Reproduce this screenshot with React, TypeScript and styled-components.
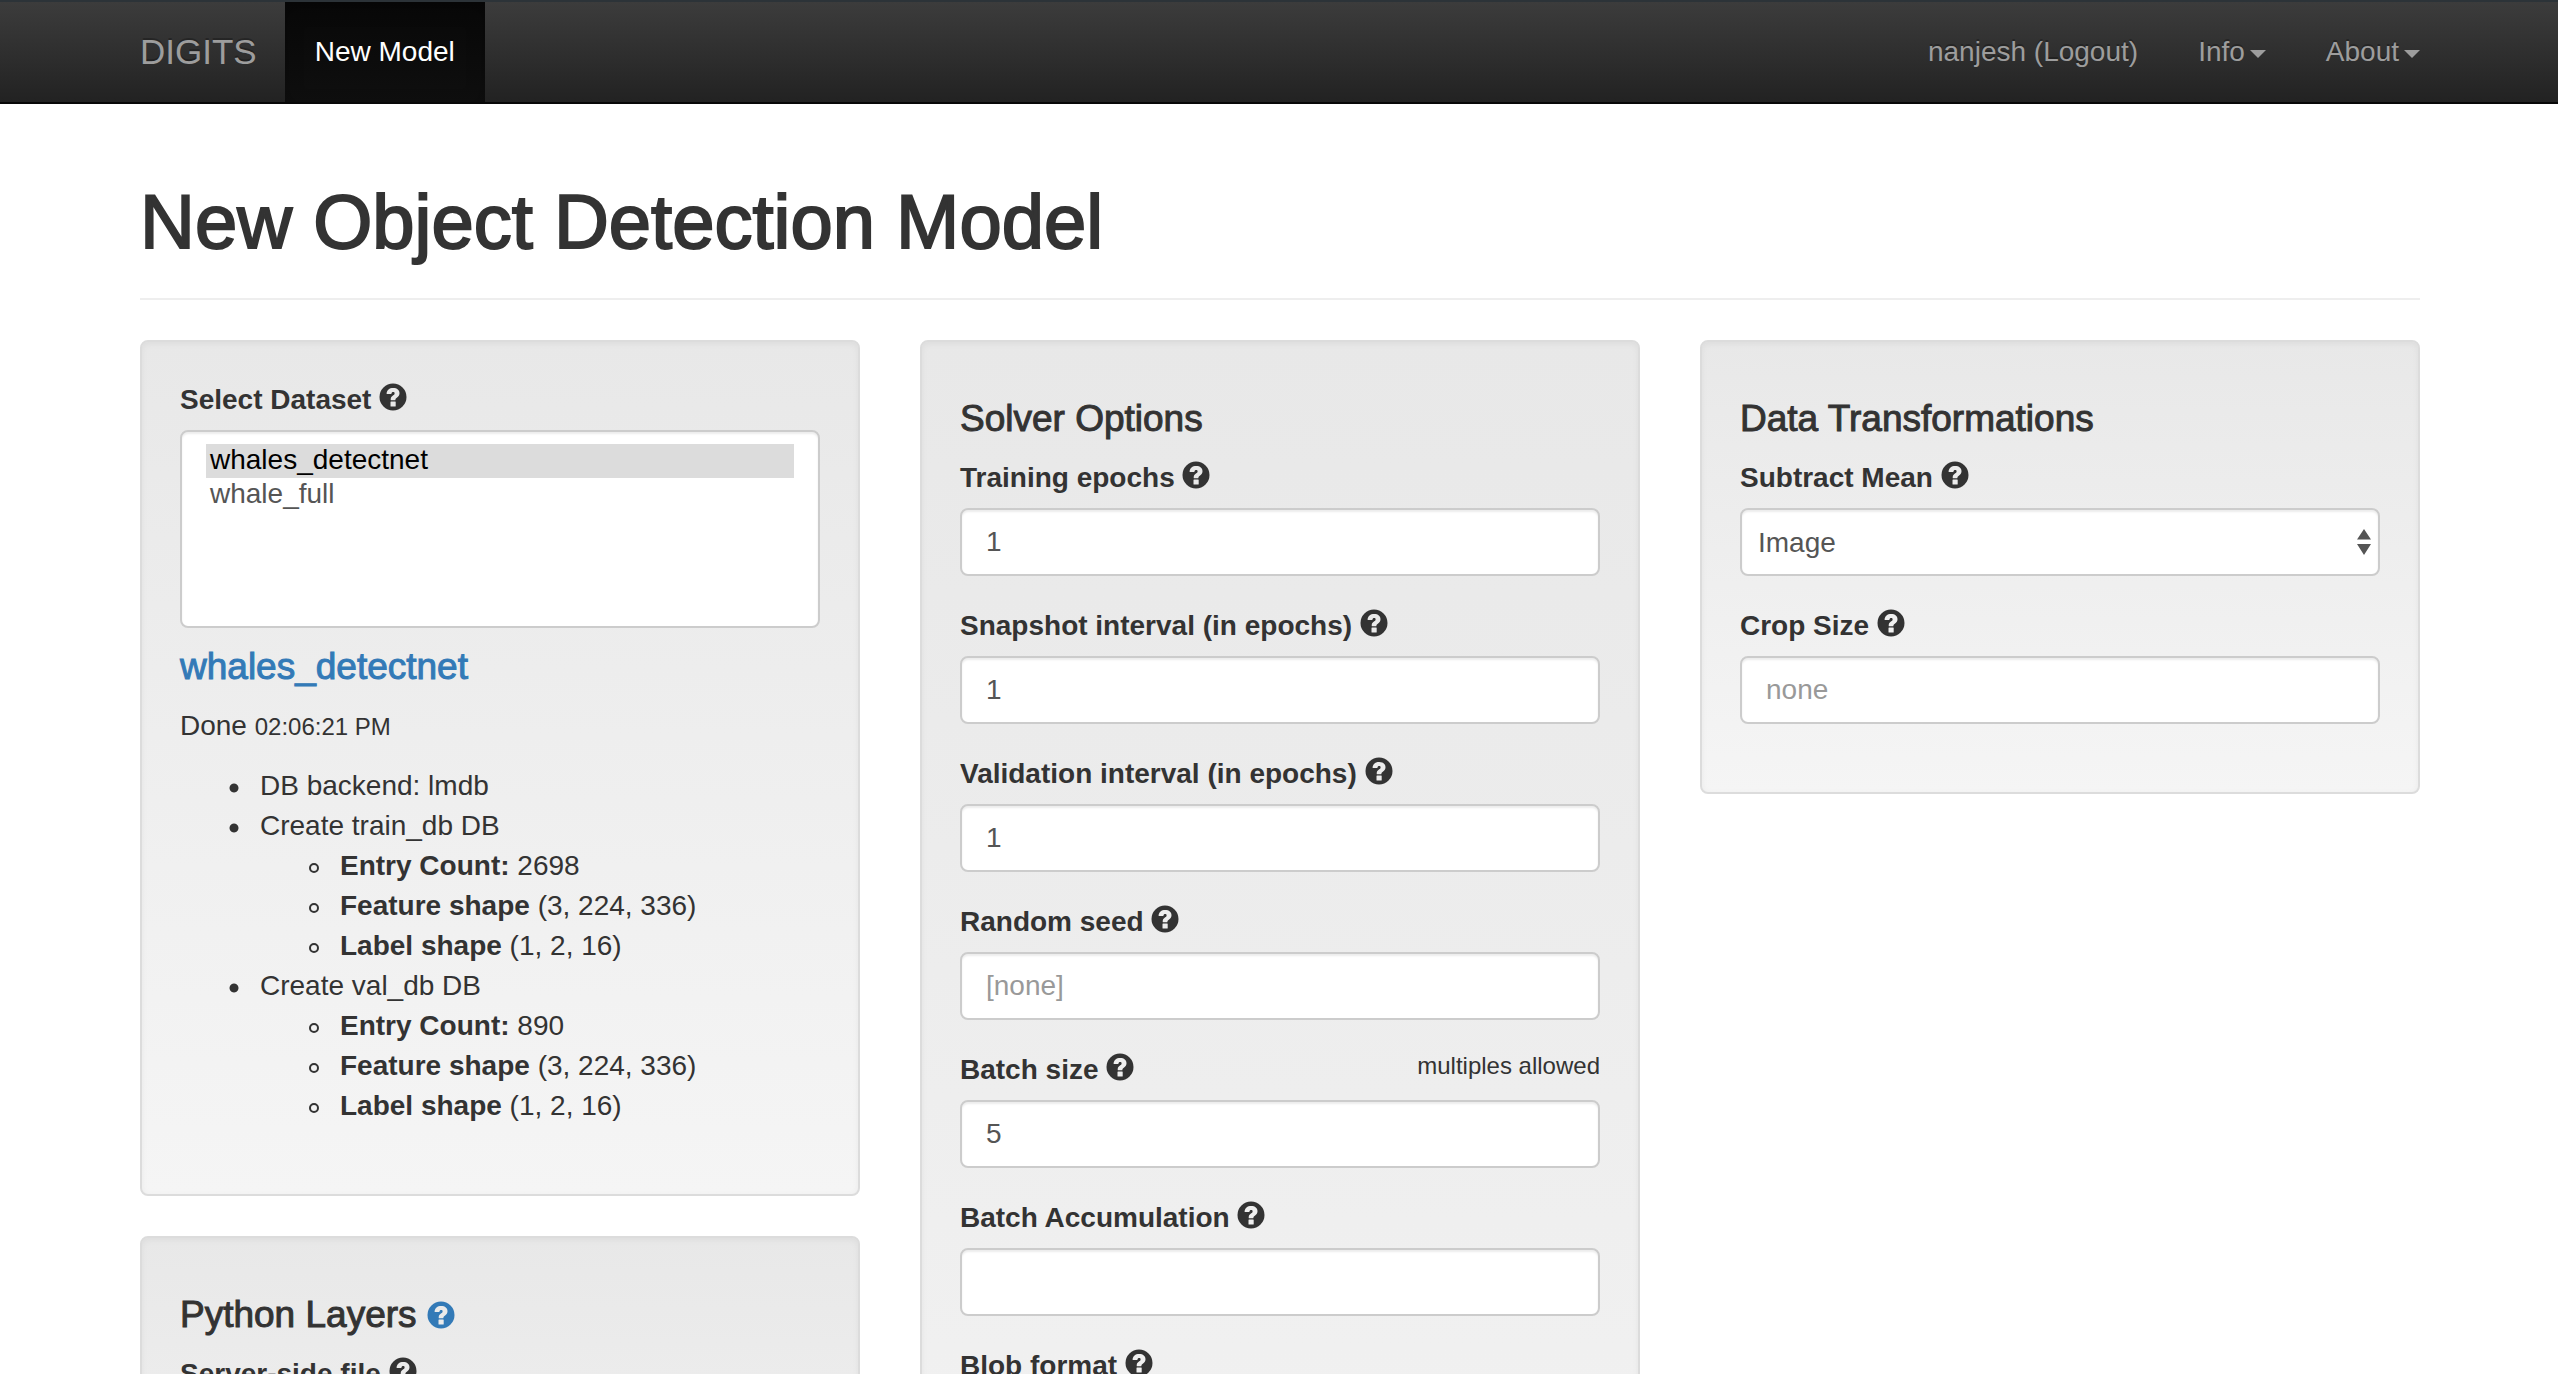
import React, { ReactNode } from "react";
import styled, { createGlobalStyle } from "styled-components";

const GlobalStyle = createGlobalStyle`
  *, *::before, *::after { box-sizing: border-box; }
  body {
    margin: 0;
    background: #fff;
    color: #333;
    font-family: "Liberation Sans", "Helvetica Neue", Helvetica, Arial, sans-serif;
    font-size: 28px;
    line-height: 40px;
  }
`;

const Page = styled.div`
  height: 100vh;
  overflow: hidden;
`;

const Navbar = styled.nav`
  display: flex;
  justify-content: space-between;
  padding: 0 138px 0 140px;
  border-top: 2px solid #2c3338;
  border-bottom: 2px solid #080808;
  background: linear-gradient(to bottom, #3c3c3c, #222);
`;

const NavGroup = styled.div`
  display: flex;
`;

const Brand = styled.a`
  padding: 30px 28px 30px 0;
  color: #9d9d9d;
  font-size: 35px;
  text-decoration: none;
  text-shadow: 0 -2px 0 rgba(0, 0, 0, 0.25);
`;

const NavLink = styled.a<{ $active?: boolean }>`
  display: flex;
  align-items: center;
  padding: 30px;
  color: ${(p) => (p.$active ? "#fff" : "#9d9d9d")};
  background: ${(p) => (p.$active ? "linear-gradient(to bottom, #080808, #0f0f0f)" : "none")};
  box-shadow: ${(p) => (p.$active ? "inset 0 6px 18px rgba(0, 0, 0, 0.25)" : "none")};
  text-decoration: none;
  text-shadow: 0 -2px 0 rgba(0, 0, 0, 0.25);

  &:last-child {
    padding-right: ${(p) => (p.$active ? "30px" : "0")};
  }
`;

const Caret = styled.span`
  margin-top: 4px;
  margin-left: 5px;
  border-top: 8px solid currentColor;
  border-right: 8px solid transparent;
  border-left: 8px solid transparent;
`;

const Main = styled.main`
  padding: 0 138px 0 140px;
`;

const PageHeader = styled.header`
  margin: 78px 0 40px;
  padding-bottom: 36px;
  border-bottom: 2px solid #eee;
`;

const Title = styled.h1`
  margin: 0;
  font-size: 76px;
  font-weight: 400;
  line-height: 80px;
  -webkit-text-stroke: 2px currentColor;
`;

const Columns = styled.form`
  display: grid;
  grid-template-columns: repeat(3, 1fr);
  align-items: start;
  gap: 60px;
`;

const Column = styled.div`
  display: flex;
  flex-direction: column;
  gap: 40px;
`;

const Well = styled.section<{ $minHeight?: number }>`
  min-height: ${(p) => (p.$minHeight ? `${p.$minHeight}px` : "auto")};
  padding: 38px;
  border: 2px solid #dcdcdc;
  border-radius: 8px;
  background: linear-gradient(to bottom, #e8e8e8, #f5f5f5);
  box-shadow: inset 0 2px 6px rgba(0, 0, 0, 0.05), 0 2px 0 rgba(255, 255, 255, 0.1);
`;

const Heading = styled.h4`
  margin: 20px 0;
  font-size: 37px;
  font-weight: 400;
  line-height: 38px;
  -webkit-text-stroke: 1px currentColor;
`;

const Link = styled.a`
  color: #337ab7;
  text-decoration: none;
`;

const Group = styled.div`
  margin-bottom: 30px;
`;

const LabelRow = styled.div`
  display: flex;
  justify-content: space-between;
  align-items: flex-start;
  margin-bottom: 10px;
`;

const Label = styled.label`
  font-weight: 700;
`;

const Small = styled.small`
  font-size: 24px;
  line-height: 32px;
`;

const HelpSvg = styled.svg`
  width: 28px;
  height: 28px;
  vertical-align: -2px;
`;

const controlStyle = `
  display: block;
  width: 100%;
  border: 2px solid #ccc;
  border-radius: 8px;
  background: #fff;
  box-shadow: inset 0 2px 2px rgba(0, 0, 0, 0.075);
  color: #555;
  font-family: inherit;
  font-size: 28px;
  outline: none;
`;

const Input = styled.input`
  ${controlStyle}
  height: 68px;
  padding: 12px 24px;

  &::placeholder { color: #999; opacity: 1; }
`;

const ListBox = styled.select`
  ${controlStyle}
  height: 198px;
  padding: 12px 24px;
  overflow: hidden;

  option {
    height: 34px;
    min-height: 34px;
    padding: 0 4px;
    line-height: 34px;
  }

  option:checked {
    background: #dcdcdc linear-gradient(#dcdcdc, #dcdcdc);
    color: #000;
  }
`;

const SelectWrap = styled.div`
  position: relative;
`;

const Select = styled.select`
  ${controlStyle}
  height: 68px;
  padding: 0 44px 0 16px;
  appearance: none;
`;

const SelectArrows = styled.svg`
  position: absolute;
  top: 21px;
  right: 9px;
  width: 14px;
  height: 26px;
  fill: #555;
  pointer-events: none;
`;

const Status = styled.p`
  margin: 0 0 20px;
`;

const Details = styled.ul`
  margin: 0 0 30px;
  padding-left: 80px;
  list-style: none;
`;

const SubDetails = styled(Details)`
  margin: 0;
`;

const Item = styled.li<{ $ring?: boolean }>`
  position: relative;

  &::before {
    content: "";
    position: absolute;
    top: 17px;
    left: -31px;
    width: 10px;
    height: 10px;
    border: 2px solid ${(p) => (p.$ring ? "#333" : "transparent")};
    border-radius: 50%;
    background: ${(p) => (p.$ring ? "none" : "radial-gradient(circle, #333 4px, transparent 5px) border-box")};
  }
`;

const HelpIcon = () => (
  <HelpSvg viewBox="0 0 28 28" aria-hidden="true">
    <path
      fill="currentColor"
      fillRule="evenodd"
      d="M14 .5a13.5 13.5 0 1 1 0 27a13.5 13.5 0 0 1 0-27zM11.5 18.900v4.200q0 .5.5.5h4.200q.5 0 .5-.5v-4.200q0-.5-.5-.5h-4.200q-.5 0-.5.5zM8.100 11.100h3.800q.4 0 .5-.4c.2-1.100.7-1.600 1.700-1.600c1 0 1.500.5 1.500 1.300c0 .8-.4 1.200-1.400 1.900c-1.700 1.200-2.500 2.300-2.500 4.100v.3q0 .5.5.5h3.700q.5 0 .5-.5c0-.9.4-1.300 1.400-2c1.800-1.200 2.700-2.500 2.700-4.400c0-3.200-2.400-5.200-6.300-5.200c-3.900 0-6.300 2-6.600 5.500q0 .5.5.5z"
    />
  </HelpSvg>
);

type FieldProps = { id: string; label: string; hint?: string; children: ReactNode };

const Field = ({ id, label, hint, children }: FieldProps) => (
  <Group>
    <LabelRow>
      <Label htmlFor={id}>
        {label} <HelpIcon />
      </Label>
      {hint && <Small>{hint}</Small>}
    </LabelRow>
    {children}
  </Group>
);

const DropDown = ({ id, options }: { id: string; options: string[] }) => (
  <SelectWrap>
    <Select id={id}>
      {options.map((o) => (
        <option key={o}>{o}</option>
      ))}
    </Select>
    <SelectArrows viewBox="0 0 14 26" aria-hidden="true">
      <path d="M7 0L14 10.500H0zM7 26L0 15H14z" />
    </SelectArrows>
  </SelectWrap>
);

const solverFields = [
  { id: "epochs", label: "Training epochs", value: "1" },
  { id: "snapshot", label: "Snapshot interval (in epochs)", value: "1" },
  { id: "validation", label: "Validation interval (in epochs)", value: "1" },
  { id: "seed", label: "Random seed", placeholder: "[none]" },
  { id: "batch", label: "Batch size", value: "5", hint: "multiples allowed" },
  { id: "accumulation", label: "Batch Accumulation" },
];

const databases = [
  { name: "train_db", count: 2698 },
  { name: "val_db", count: 890 },
];

export default function App() {
  return (
    <Page>
      <GlobalStyle />
      <Navbar>
        <NavGroup>
          <Brand href="#">DIGITS</Brand>
          <NavLink href="#" $active>
            New Model
          </NavLink>
        </NavGroup>
        <NavGroup>
          <NavLink href="#">nanjesh (Logout)</NavLink>
          <NavLink href="#">
            Info
            <Caret />
          </NavLink>
          <NavLink href="#">
            About
            <Caret />
          </NavLink>
        </NavGroup>
      </Navbar>
      <Main>
        <PageHeader>
          <Title>New Object Detection Model</Title>
        </PageHeader>
        <Columns>
          <Column>
            <Well>
              <LabelRow>
                <Label htmlFor="dataset">
                  Select Dataset <HelpIcon />
                </Label>
              </LabelRow>
              <ListBox id="dataset" size={4} defaultValue="whales_detectnet">
                <option>whales_detectnet</option>
                <option>whale_full</option>
              </ListBox>
              <Heading>
                <Link href="#">whales_detectnet</Link>
              </Heading>
              <Status>
                Done <Small>02:06:21 PM</Small>
              </Status>
              <Details>
                <Item>DB backend: lmdb</Item>
                {databases.map((db) => (
                  <Item key={db.name}>
                    Create {db.name} DB
                    <SubDetails>
                      <Item $ring>
                        <b>Entry Count:</b> {db.count}
                      </Item>
                      <Item $ring>
                        <b>Feature shape</b> (3, 224, 336)
                      </Item>
                      <Item $ring>
                        <b>Label shape</b> (1, 2, 16)
                      </Item>
                    </SubDetails>
                  </Item>
                ))}
              </Details>
            </Well>
            <Well $minHeight={460}>
              <Heading>
                Python Layers{" "}
                <Link href="#" aria-label="Help">
                  <HelpIcon />
                </Link>
              </Heading>
              <Field id="python" label="Server-side file">
                <Input id="python" />
              </Field>
            </Well>
          </Column>
          <Well $minHeight={1640}>
            <Heading>Solver Options</Heading>
            {solverFields.map((f) => (
              <Field key={f.id} id={f.id} label={f.label} hint={f.hint}>
                <Input id={f.id} defaultValue={f.value} placeholder={f.placeholder} />
              </Field>
            ))}
            <Field id="blob" label="Blob format">
              <DropDown id="blob" options={["NVCaffe"]} />
            </Field>
          </Well>
          <Well>
            <Heading>Data Transformations</Heading>
            <Field id="mean" label="Subtract Mean">
              <DropDown id="mean" options={["Image", "Pixel", "None"]} />
            </Field>
            <Field id="crop" label="Crop Size">
              <Input id="crop" placeholder="none" />
            </Field>
          </Well>
        </Columns>
      </Main>
    </Page>
  );
}
